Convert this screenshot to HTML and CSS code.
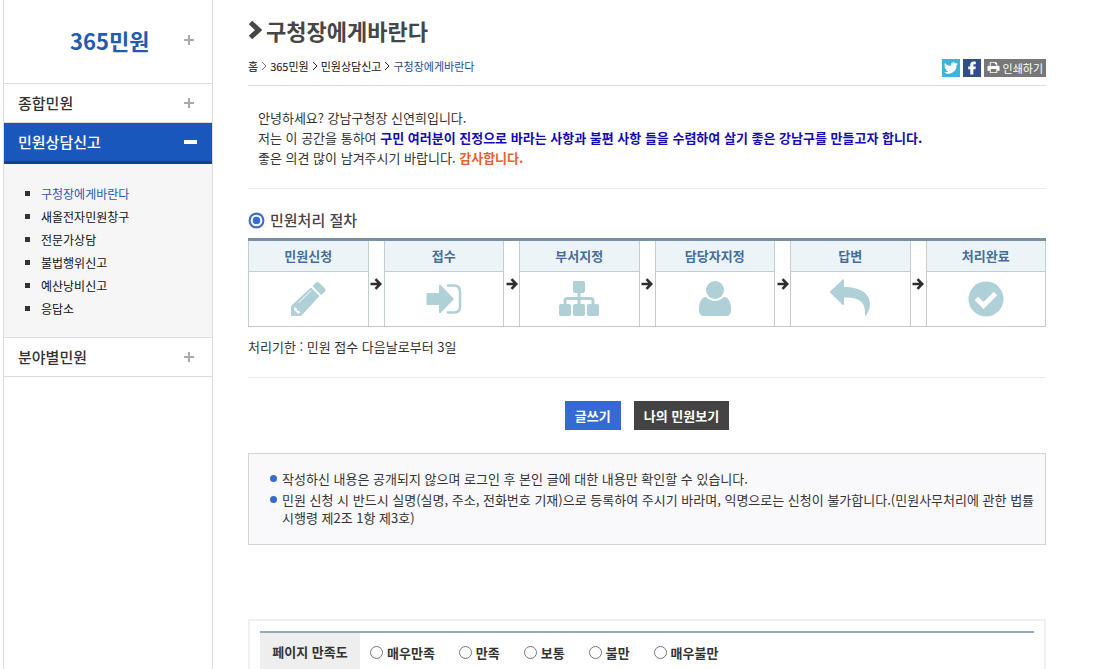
FILE: index.html
```html
<!DOCTYPE html>
<html lang="ko">
<head>
<meta charset="utf-8">
<title>구청장에게바란다</title>
<link rel="stylesheet" href="styles.css">
</head>
<body>
<div class="page">
  <nav class="side" aria-label="365민원">
    <a class="side-title" href="#"><span>365민원</span><i class="plus"></i></a>
    <a class="side-item" href="#"><span>종합민원</span><i class="plus"></i></a>
    <a class="side-item active" href="#"><span>민원상담신고</span><i class="minus"></i></a>
    <ul class="side-sub">
      <li><a class="current" href="#">구청장에게바란다</a></li>
      <li><a href="#">새올전자민원창구</a></li>
      <li><a href="#">전문가상담</a></li>
      <li><a href="#">불법행위신고</a></li>
      <li><a href="#">예산낭비신고</a></li>
      <li><a href="#">응답소</a></li>
    </ul>
    <a class="side-item" href="#"><span>분야별민원</span><i class="plus"></i></a>
  </nav>

  <main class="content">
    <h1 class="title">
      <svg class="title-icon" viewBox="0 0 14 20" aria-hidden="true"><path d="M2.500 2.500 10.500 10l-8 7.500" fill="none" stroke="#464646" stroke-width="5"/></svg>
      구청장에게바란다
    </h1>
    <div class="bar">
      <div class="crumbs">
        <a href="#">홈</a>
        <svg viewBox="0 0 6 10" aria-hidden="true"><path d="m1 1 4 4-4 4" fill="none" stroke="#777"/></svg>
        <a href="#">365민원</a>
        <svg viewBox="0 0 6 10" aria-hidden="true"><path d="m1 1 4 4-4 4" fill="none" stroke="#222"/></svg>
        <a href="#">민원상담신고</a>
        <svg viewBox="0 0 6 10" aria-hidden="true"><path d="m1 1 4 4-4 4" fill="none" stroke="#222"/></svg>
        <a class="here" href="#">구청장에게바란다</a>
      </div>
      <div class="tools">
        <a class="tool twitter" href="#" aria-label="트위터"><svg viewBox="0 0 24 24"><path fill="#fff" d="M23.600 4.900a9.500 9.500 0 0 1-2.700.8 4.800 4.800 0 0 0 2.100-2.700c-.9.600-2 1-3.100 1.200a4.800 4.800 0 0 0-8.300 4.400C7.700 8.400 4.100 6.500 1.700 3.500a4.800 4.800 0 0 0 1.500 6.500 4.800 4.800 0 0 1-2.200-.6c0 2.300 1.600 4.300 3.900 4.800-.7.200-1.400.2-2.200.1a4.800 4.800 0 0 0 4.500 3.400A9.800 9.800 0 0 1 .2 19.600a13.800 13.800 0 0 0 21.200-12.300c.9-.6 1.700-1.500 2.200-2.400z"/></svg></a>
        <a class="tool facebook" href="#" aria-label="페이스북"><svg viewBox="0 0 24 24"><path fill="#fff" d="M14.300 23v-9h3.600l.6-4.500h-4.200V7.300c0-1.300.5-1.800 2-1.800h2.200V1.200C17.500 1.100 16.500 1 15.100 1c-3.600 0-6 1.900-6 5.700v2.800H5.500V14h3.600v9z"/></svg></a>
        <button class="print" type="button"><svg viewBox="0 0 14 14" aria-hidden="true"><path fill="#fff" fill-rule="evenodd" d="M3 1h6.500L11 2.500V5h1c.9 0 1.500.6 1.500 1.500V10.500H11V13H3v-2.500H.5v-4C.5 5.600 1.100 5 2 5h1zm1 1v3.500h6V3.500H8.500V2zm0 6.500V12h6V8.500z"/></svg>인쇄하기</button>
      </div>
    </div>

    <p class="intro">안녕하세요? 강남구청장 신연희입니다.<br>
      저는 이 공간을 통하여 <strong class="blue">구민 여러분이 진정으로 바라는 사항과 불편 사항 들을 수렴하여 살기 좋은 강남구를 만들고자 합니다.</strong><br>
      좋은 의견 많이 남겨주시기 바랍니다. <strong class="orange">감사합니다.</strong></p>

    <h2 class="subtitle">
      <svg viewBox="0 0 16 16" aria-hidden="true"><circle cx="8" cy="8" r="6.500" fill="none" stroke="#3a6bd1" stroke-width="2"/><circle cx="8" cy="8" r="3.500" fill="#3a6bd1"/></svg>
      민원처리 절차
    </h2>
    <table class="steps">
      <thead>
        <tr>
          <th>민원신청</th>
          <td class="arrow" rowspan="2"><svg viewBox="0 0 12 12"><path d="M0.500 6H10M5.500 1.200 10.200 6l-4.700 4.800" fill="none" stroke="#2d2d2d" stroke-width="2.600"/></svg></td>
          <th>접수</th>
          <td class="arrow" rowspan="2"><svg viewBox="0 0 12 12"><path d="M0.500 6H10M5.500 1.200 10.200 6l-4.700 4.800" fill="none" stroke="#2d2d2d" stroke-width="2.600"/></svg></td>
          <th>부서지정</th>
          <td class="arrow" rowspan="2"><svg viewBox="0 0 12 12"><path d="M0.500 6H10M5.500 1.200 10.200 6l-4.700 4.800" fill="none" stroke="#2d2d2d" stroke-width="2.600"/></svg></td>
          <th>담당자지정</th>
          <td class="arrow" rowspan="2"><svg viewBox="0 0 12 12"><path d="M0.500 6H10M5.500 1.200 10.200 6l-4.700 4.800" fill="none" stroke="#2d2d2d" stroke-width="2.600"/></svg></td>
          <th>답변</th>
          <td class="arrow" rowspan="2"><svg viewBox="0 0 12 12"><path d="M0.500 6H10M5.500 1.200 10.200 6l-4.700 4.800" fill="none" stroke="#2d2d2d" stroke-width="2.600"/></svg></td>
          <th>처리완료</th>
        </tr>
        <tr class="icons">
          <td><svg viewBox="0 0 42 42"><path fill="#afd0d7" d="M24 9.500 32.500 18 14 38H4V28zM25.500 8l3-3c1.200-1.200 2.800-1.200 4 0l5 5c1.200 1.200 1.200 2.800 0 4L34 17z"/><path fill="#fff" d="m7 29.500 2.500.5.500 2.500 2.500.5.500 2-2 .8-4-3.800z"/><path d="M11.500 25 24 12.500" stroke="#fff" fill="none"/></svg></td>
          <td><svg viewBox="0 0 42 42"><path fill="#afd0d7" d="M5 15h11V8c0-1.500 1-1.500 2-.5L31 21 18 34.500c-1 1-2 1-2-.5v-7H5c-1 0-1.500-.5-1.500-1.500v-9c0-1 .5-1.500 1.500-1.500z"/><path d="M24 7.500h7c4 0 6 2 6 6v15c0 4-2 6-6 6h-7" stroke="#afd0d7" stroke-width="2.500" fill="none"/></svg></td>
          <td><svg viewBox="0 0 42 42"><g fill="#afd0d7"><rect x="15" y="3" width="12" height="12" rx="2"/><rect x="1" y="26" width="12" height="12" rx="2"/><rect x="15" y="26" width="12" height="12" rx="2"/><rect x="29" y="26" width="12" height="12" rx="2"/></g><path d="M21 14v13M7 27v-4q0-2.500 2.500-2.500h23Q35 20.500 35 23v4" stroke="#afd0d7" stroke-width="3" fill="none"/></svg></td>
          <td><svg viewBox="0 0 42 42"><g fill="#afd0d7"><circle cx="21" cy="12" r="9"/><path d="M12 19c5 5 13 5 18 0 5 0 7 6 7 13 0 4-2 6-5 6H10c-3 0-5-2-5-6 0-7 2-13 7-13z"/></g><path d="M12.500 18.500c5 5 12 5 17 0" stroke="#fff" fill="none"/></svg></td>
          <td><svg viewBox="0 0 42 42"><path fill="#afd0d7" d="M.5 14 13.500 1.800c.8-.8 1.500-.5 1.500.7V9c17 0 26 7 26 17 0 4-1.500 8-4 11.500-.7.700-1.200.5-1-.5C37 24 30 19 15 19.500V26c0 1.200-.7 1.500-1.500.7z"/></svg></td>
          <td><svg viewBox="0 0 42 42"><circle cx="21" cy="21" r="17.500" fill="#afd0d7"/><path d="m11.500 20.500 7 7 12-12" fill="none" stroke="#fff" stroke-width="5"/></svg></td>
        </tr>
      </thead>
    </table>
    <p class="deadline">처리기한 : 민원 접수 다음날로부터 3일</p>

    <div class="actions">
      <button class="btn primary" type="button">글쓰기</button>
      <button class="btn" type="button">나의 민원보기</button>
    </div>

    <ul class="notes">
      <li>작성하신 내용은 공개되지 않으며 로그인 후 본인 글에 대한 내용만 확인할 수 있습니다.</li>
      <li>민원 신청 시 반드시 실명(실명, 주소, 전화번호 기재)으로 등록하여 주시기 바라며, 익명으로는 신청이 불가합니다.(민원사무처리에 관한 법률 시행령 제2조 1항 제3호)</li>
    </ul>

    <form class="survey">
      <div class="survey-row" role="radiogroup" aria-labelledby="survey-label">
        <span class="survey-label" id="survey-label">페이지 만족도</span>
        <div class="options">
          <label><input type="radio" name="score">매우만족</label>
          <label><input type="radio" name="score">만족</label>
          <label><input type="radio" name="score">보통</label>
          <label><input type="radio" name="score">불만</label>
          <label><input type="radio" name="score">매우불만</label>
        </div>
      </div>
    </form>
  </main>
</div>
</body>
</html>
```
FILE: styles.css
```css
* { box-sizing: border-box; }
body {
  margin: 0;
  background: #fff;
  color: #333;
  font: 13px/20px "Noto Sans CJK KR", "Noto Sans", sans-serif;
  word-break: keep-all;
}
a { color: inherit; text-decoration: none; }
h1, h2, p, ul { margin: 0; padding: 0; }
ul { list-style: none; }
button { border: 0; font: inherit; cursor: pointer; }
svg { display: block; flex: none; }

.page { display: flex; min-height: 100vh; padding: 0 55px 0 3px; gap: 35px; }

.side {
  flex: none;
  width: 210px;
  border: solid #dcdcdc;
  border-width: 0 1px;
}
.side-title, .side-item {
  display: flex;
  align-items: center;
  justify-content: space-between;
  padding: 0 18px 0 14px;
  border-bottom: 1px solid #dcdcdc;
}
.side-title {
  height: 84px;
  padding-left: 66px;
  padding-bottom: 4px;
  color: #1f5bb0;
  font-size: 22px;
  font-weight: 700;
}
.side-item { height: 39px; font-size: 15px; font-weight: 500; }
.side-item.active {
  height: 41px;
  padding-right: 15px;
  background: #1a57bd;
  border-bottom: 3px solid #173f82;
  color: #fff;
}
.plus {
  width: 10px;
  height: 10px;
  background:
    linear-gradient(#aaa, #aaa) center / 10px 2px no-repeat,
    linear-gradient(#aaa, #aaa) center / 2px 10px no-repeat;
}
.minus { width: 13px; height: 4px; background: #fff; }
.side-sub {
  padding: 18px 0 17px 21px;
  background: #f6f6f6;
  border-bottom: 1px solid #dcdcdc;
  color: #111;
  font-size: 12px;
  line-height: 23px;
}
.side-sub li { display: flex; align-items: center; gap: 11px; }
.side-sub li::before { content: ""; width: 5px; height: 5px; background: #333; }
.side-sub .current { color: #1f5bb0; }

.content { flex: 1; min-width: 0; display: flex; flex-direction: column; }
.title {
  display: flex;
  align-items: center;
  gap: 4px;
  padding: 14px 0 1px;
  color: #464646;
  font-size: 22px;
  line-height: 32px;
  font-weight: 700;
}
.title-icon { width: 14px; height: 20px; }
.bar {
  display: flex;
  justify-content: space-between;
  align-items: center;
  height: 39px;
  border-bottom: 1px solid #dcdcdc;
}
.crumbs { display: flex; align-items: center; gap: 3px; color: #111; font-size: 11px; }
.crumbs svg { width: 6px; height: 10px; }
.crumbs .here { color: #1c4c94; }
.tools { display: flex; gap: 3px; padding-top: 3px; }
.tool { display: flex; align-items: center; justify-content: center; width: 18px; height: 18px; }
.tool svg { width: 14px; height: 14px; }
.twitter { background: #3cb5d8; }
.facebook { background: #2f4c8c; }
.print {
  display: flex;
  align-items: center;
  gap: 3px;
  height: 18px;
  padding: 0 3px;
  background: #777;
  color: #fff;
  font-size: 11px;
}
.print svg { width: 13px; height: 13px; }

.intro { padding: 22px 10px 20px; border-bottom: 1px solid #ebebeb; }
.blue { color: #1409b8; }
.orange { color: #e9602f; }

.subtitle {
  display: flex;
  align-items: center;
  gap: 5px;
  padding: 19px 0 6px;
  color: #444;
  font-size: 15px;
  line-height: 24px;
  font-weight: 500;
}
.subtitle svg { width: 17px; height: 17px; }

.steps {
  width: 100%;
  table-layout: fixed;
  border-collapse: collapse;
  border-top: 3px solid #7890a5;
}
.steps th, .steps td { padding: 0; border: 1px solid #c2cdd0; border-top-width: 0; }
.steps th {
  height: 32px;
  background: #ecf4f7;
  color: #456d99;
  font-weight: 700;
}
.steps .icons td { height: 55px; border-top-width: 1px; }
.icons svg { width: 42px; height: 42px; margin: auto; }
.steps .arrow { width: 16px; }
.arrow svg { width: 12px; height: 12px; margin: auto; }

.deadline { padding: 10px 0 20px; border-bottom: 1px solid #ebebeb; }
.actions { display: flex; justify-content: center; gap: 13px; padding: 23px 0; }
.btn { height: 29px; padding: 0 10px; background: #434343; color: #fff; font-weight: 700; }
.primary { background: #3769d6; }

.notes {
  display: flex;
  flex-direction: column;
  gap: 3px;
  padding: 16px 5px 17px 21px;
  background: #f9f9fc;
  border: 1px solid #d4d4d4;
  line-height: 18px;
}
.notes li { display: flex; gap: 5px; }
.notes li::before {
  content: "";
  flex: none;
  width: 7px;
  height: 7px;
  margin-top: 5px;
  border-radius: 50%;
  background: #3769d0;
}

.survey {
  flex: 1;
  margin-top: 74px;
  padding: 10px 10px 0;
  border: 2px solid #f0f0f0;
  border-bottom: 0;
}
.survey-row { display: flex; border-top: 2px solid #90abbf; font-weight: 700; }
.survey-label { width: 100px; padding: 9px 0 7px; background: #eee; text-align: center; }
.options { display: flex; align-items: center; gap: 24px; padding: 3px 10px 0; }
.options label { display: flex; align-items: center; gap: 4px; }
.options input { width: 13px; height: 13px; margin: 0; }
```
